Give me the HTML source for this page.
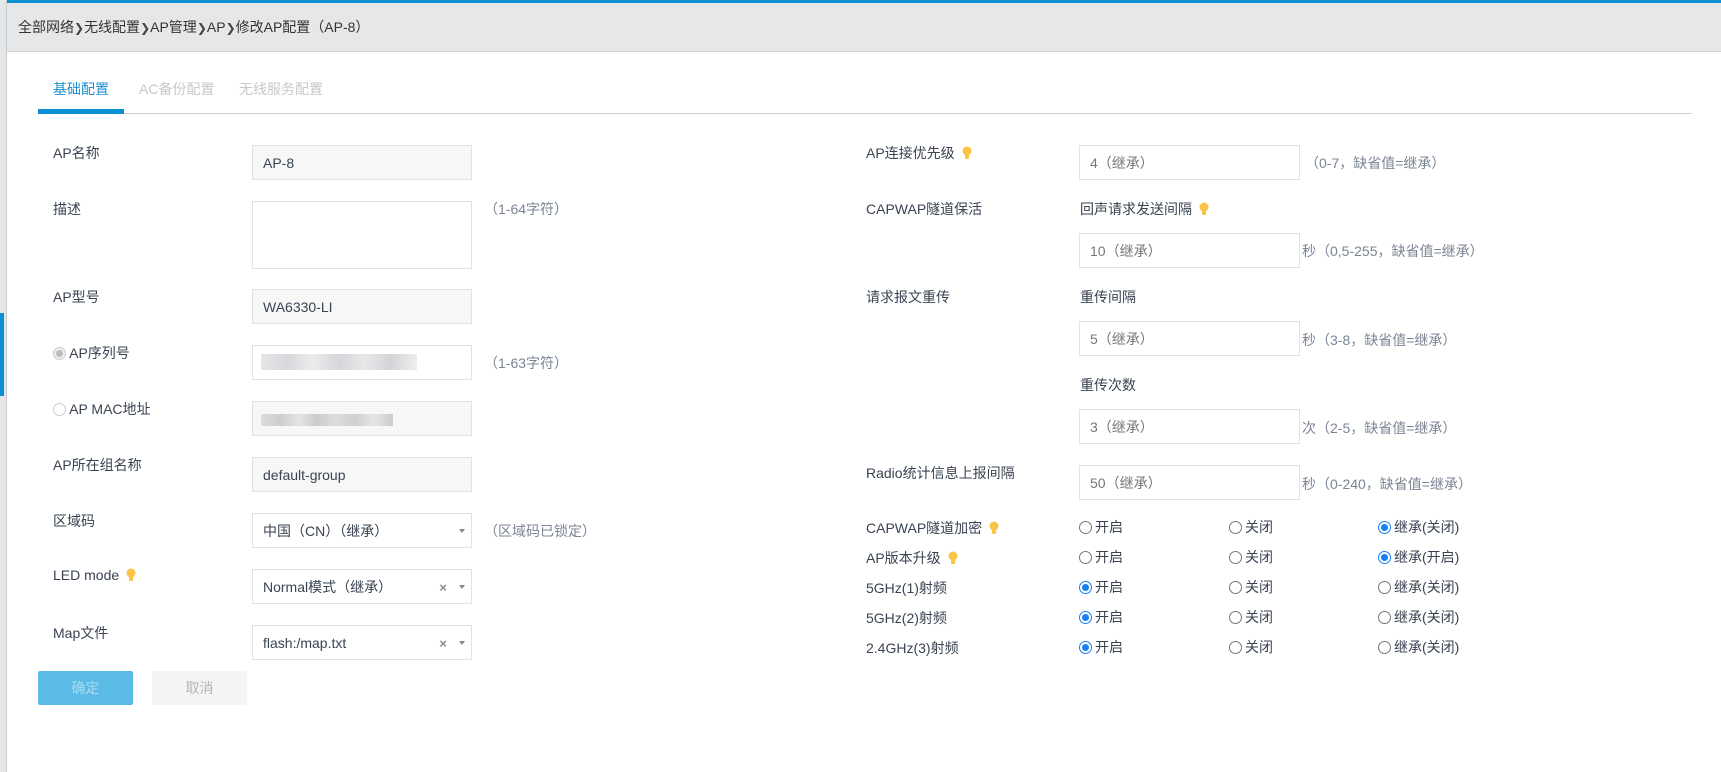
<!DOCTYPE html>
<html><head><meta charset="utf-8"><style>
*{box-sizing:border-box;margin:0;padding:0}
body{width:1721px;height:772px;position:relative;overflow:hidden;background:#fff;font-family:"Liberation Sans","Noto Sans CJK SC",sans-serif;font-size:14px;color:#3a4352}
.a{position:absolute;white-space:nowrap}
.topbar{left:0;top:0;width:1721px;height:3px;background:#0a8fd2}
.side{left:0;top:0;width:7px;height:772px;background:#e4e6e8;border-right:1px solid #c8cbce}
.hdr{left:7px;top:3px;width:1714px;height:49px;background:#e6e7e9;border-bottom:1px solid #d0d2d4}
.lbl{font-size:14px;color:#3a4352}
.inp{position:absolute;border:1px solid #e1e3e5;height:35px;background:#fff;padding:0 10px;line-height:35px;font-size:14px;color:#3a4352}
.ro{background:#f7f7f7}
.rinp{color:#777}
.hint{color:#7b8594;font-size:14px}
.bulb{display:inline-block;width:10px;height:14px;vertical-align:-2px;margin-left:7px}
.rad{position:absolute;font-size:14px;color:#3a4352;line-height:16px}
.rad i{display:inline-block;width:13px;height:13px;border:1px solid #777;border-radius:50%;vertical-align:-2px;margin-right:3px;position:relative}
.rad i.on{border-color:#1a7ff0}
.rad i.on:after{content:"";position:absolute;left:2px;top:2px;width:7px;height:7px;border-radius:50%;background:#1a7ff0}
.arr{position:absolute;right:6px;top:15px;width:0;height:0;border-left:3px solid transparent;border-right:3px solid transparent;border-top:4px solid #888}
.x{position:absolute;right:24px;top:0;color:#888;font-size:13px;font-weight:bold}
.ch{font-family:"DejaVu Sans";font-size:12px;font-weight:bold;color:#444}
</style></head><body>
<div class="a topbar"></div>
<div class="a side"></div>
<div class="a" style="left:0;top:313px;width:4px;height:83px;background:#0a8fd2"></div>
<div class="a hdr"></div>
<div class="a" style="left:18px;top:17px;font-size:14px;color:#333">全部网络<span class="ch">❯</span>无线配置<span class="ch">❯</span>AP管理<span class="ch">❯</span>AP<span class="ch">❯</span>修改AP配置（AP-8）</div>

<div class="a" style="left:53px;top:79px;color:#1a8fd2">基础配置</div>
<div class="a" style="left:139px;top:79px;color:#c6c8cb">AC备份配置</div>
<div class="a" style="left:239px;top:79px;color:#c6c8cb">无线服务配置</div>
<div class="a" style="left:38px;top:113px;width:1654px;height:1px;background:#cfd1d3"></div>
<div class="a" style="left:38px;top:109px;width:86px;height:5px;background:#0a8fd2"></div>

<div class="a lbl" style="left:53px;top:143px">AP名称</div>
<div class="inp ro" style="left:252px;top:145px;width:220px">AP-8</div>
<div class="a lbl" style="left:53px;top:199px">描述</div>
<div class="inp" style="left:252px;top:201px;width:220px;height:68px"></div>
<div class="a hint" style="left:484px;top:199px">（1-64字符）</div>
<div class="a lbl" style="left:53px;top:287px">AP型号</div>
<div class="inp ro" style="left:252px;top:289px;width:220px">WA6330-LI</div>
<div class="a lbl" style="left:53px;top:343px"><span style="display:inline-block;width:13px;height:13px;border:1px solid #ccc;border-radius:50%;background:#eee;vertical-align:-2px;position:relative"><span style="position:absolute;left:2px;top:2px;width:7px;height:7px;border-radius:50%;background:#bbb"></span></span> AP序列号</div>
<div class="inp" style="left:252px;top:345px;width:220px"><div style="position:absolute;left:8px;top:8px;width:156px;height:16px;background:linear-gradient(90deg,#e6e6e8,#d8d8dc,#ececee,#d6d6da,#e8e8ea,#d4d4d8,#eeeeee)"></div></div>
<div class="a hint" style="left:484px;top:353px">（1-63字符）</div>
<div class="a lbl" style="left:53px;top:399px"><span style="display:inline-block;width:13px;height:13px;border:1px solid #ccc;border-radius:50%;vertical-align:-2px"></span> AP MAC地址</div>
<div class="inp ro" style="left:252px;top:401px;width:220px"><div style="position:absolute;left:8px;top:12px;width:132px;height:12px;background:linear-gradient(90deg,#ddd,#ccc,#e4e4e4,#ccc,#ddd,#cfcfcf,#e6e6e6,#ccc)"></div></div>
<div class="a lbl" style="left:53px;top:455px">AP所在组名称</div>
<div class="inp ro" style="left:252px;top:457px;width:220px">default-group</div>
<div class="a lbl" style="left:53px;top:511px">区域码</div>
<div class="inp" style="left:252px;top:513px;width:220px">中国（CN）（继承）<span class="arr"></span></div>
<div class="a hint" style="left:484px;top:521px">（区域码已锁定）</div>
<div class="a lbl" style="left:53px;top:567px">LED mode<svg class="bulb" viewBox="0 0 10 14"><circle cx="5" cy="5" r="4.5" fill="#fbc447"/><rect x="3" y="8" width="4" height="5" rx="1" fill="#fbc447"/></svg></div>
<div class="inp" style="left:252px;top:569px;width:220px">Normal模式（继承）<span class="x">×</span><span class="arr"></span></div>
<div class="a lbl" style="left:53px;top:623px">Map文件</div>
<div class="inp" style="left:252px;top:625px;width:220px">flash:/map.txt<span class="x">×</span><span class="arr"></span></div>
<div class="a" style="left:38px;top:671px;width:95px;height:34px;background:#5bbbe6;border-radius:2px;color:#a9dcf3;text-align:center;line-height:34px">确定</div>
<div class="a" style="left:152px;top:671px;width:95px;height:34px;background:#f4f4f4;border-radius:2px;color:#b4b6b9;text-align:center;line-height:34px">取消</div>

<div class="a lbl" style="left:866px;top:143px">AP连接优先级<svg class="bulb" viewBox="0 0 10 14"><circle cx="5" cy="5" r="4.5" fill="#fbc447"/><rect x="3" y="8" width="4" height="5" rx="1" fill="#fbc447"/></svg></div>
<div class="inp rinp" style="left:1079px;top:145px;width:221px">4（继承）</div>
<div class="a hint" style="left:1305px;top:153px">（0-7，缺省值=继承）</div>
<div class="a lbl" style="left:866px;top:199px">CAPWAP隧道保活</div>
<div class="a lbl" style="left:1080px;top:199px">回声请求发送间隔<svg class="bulb" viewBox="0 0 10 14"><circle cx="5" cy="5" r="4.5" fill="#fbc447"/><rect x="3" y="8" width="4" height="5" rx="1" fill="#fbc447"/></svg></div>
<div class="inp rinp" style="left:1079px;top:233px;width:221px">10（继承）</div>
<div class="a hint" style="left:1302px;top:241px">秒（0,5-255，缺省值=继承）</div>
<div class="a lbl" style="left:866px;top:287px">请求报文重传</div>
<div class="a lbl" style="left:1080px;top:287px">重传间隔</div>
<div class="inp rinp" style="left:1079px;top:321px;width:221px">5（继承）</div>
<div class="a hint" style="left:1302px;top:330px">秒（3-8，缺省值=继承）</div>
<div class="a lbl" style="left:1080px;top:375px">重传次数</div>
<div class="inp rinp" style="left:1079px;top:409px;width:221px">3（继承）</div>
<div class="a hint" style="left:1302px;top:418px">次（2-5，缺省值=继承）</div>
<div class="a lbl" style="left:866px;top:463px">Radio统计信息上报间隔</div>
<div class="inp rinp" style="left:1079px;top:465px;width:221px">50（继承）</div>
<div class="a hint" style="left:1302px;top:474px">秒（0-240，缺省值=继承）</div>

<div class="a lbl" style="left:866px;top:518px">CAPWAP隧道加密<svg class="bulb" viewBox="0 0 10 14"><circle cx="5" cy="5" r="4.5" fill="#fbc447"/><rect x="3" y="8" width="4" height="5" rx="1" fill="#fbc447"/></svg></div>
<div class="a lbl" style="left:866px;top:548px">AP版本升级<svg class="bulb" viewBox="0 0 10 14"><circle cx="5" cy="5" r="4.5" fill="#fbc447"/><rect x="3" y="8" width="4" height="5" rx="1" fill="#fbc447"/></svg></div>
<div class="a lbl" style="left:866px;top:578px">5GHz(1)射频</div>
<div class="a lbl" style="left:866px;top:608px">5GHz(2)射频</div>
<div class="a lbl" style="left:866px;top:638px">2.4GHz(3)射频</div>

<div class="rad" style="left:1079px;top:519px"><i></i>开启</div>
<div class="rad" style="left:1229px;top:519px"><i></i>关闭</div>
<div class="rad" style="left:1378px;top:519px"><i class="on"></i>继承(关闭)</div>
<div class="rad" style="left:1079px;top:549px"><i></i>开启</div>
<div class="rad" style="left:1229px;top:549px"><i></i>关闭</div>
<div class="rad" style="left:1378px;top:549px"><i class="on"></i>继承(开启)</div>
<div class="rad" style="left:1079px;top:579px"><i class="on"></i>开启</div>
<div class="rad" style="left:1229px;top:579px"><i></i>关闭</div>
<div class="rad" style="left:1378px;top:579px"><i></i>继承(关闭)</div>
<div class="rad" style="left:1079px;top:609px"><i class="on"></i>开启</div>
<div class="rad" style="left:1229px;top:609px"><i></i>关闭</div>
<div class="rad" style="left:1378px;top:609px"><i></i>继承(关闭)</div>
<div class="rad" style="left:1079px;top:639px"><i class="on"></i>开启</div>
<div class="rad" style="left:1229px;top:639px"><i></i>关闭</div>
<div class="rad" style="left:1378px;top:639px"><i></i>继承(关闭)</div>
</body></html>
